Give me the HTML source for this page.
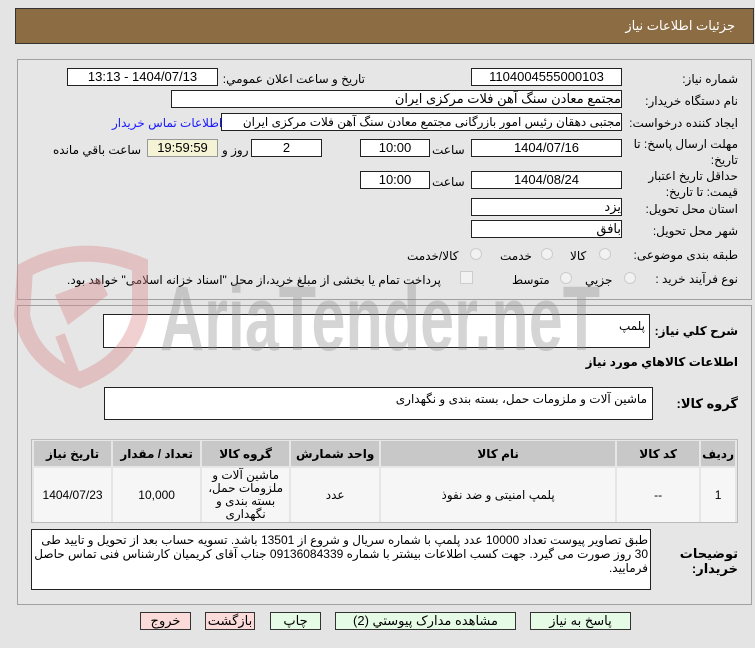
<!DOCTYPE html>
<html><head><meta charset="utf-8"><style>
body{margin:0;width:755px;height:648px;background:#e4e4e4;font-family:Tahoma,"Liberation Sans","DejaVu Sans",sans-serif;font-size:12px;color:#000;position:relative;overflow:hidden}
.a{position:absolute}
.hdr{left:15px;top:8px;width:737px;height:34px;background:#8c6c43;border:1px solid #333;}
.hdr span{position:absolute;right:18px;top:9px;color:#fff;font-size:13px}
.panel{border:1px solid #a0a0a0;background:#e6e6e6}
.box{position:absolute;background:#fff;border:1px solid #222;height:16px;line-height:16px;text-align:center;font-size:13px;direction:rtl;white-space:nowrap;overflow:hidden}
.lbl{position:absolute;direction:rtl;white-space:nowrap;font-size:12px}
.rad{position:absolute;width:10px;height:10px;border:1px solid #ccc;border-radius:50%;background:#f2f2f2}
table{border-collapse:separate;border-spacing:2px;direction:rtl}
td,th{text-align:center;font-size:12px}
th{background:#c8c8c8;height:23px;font-weight:bold}
td{background:#f6f6f6}
.btn{position:absolute;top:612px;height:16px;border:1px solid #333;background:#e6fbe6;text-align:center;line-height:16px;font-size:13px}
.red{background:#fbdada}
</style></head><body>
<div class="a hdr"><span>جزئيات اطلاعات نياز</span></div>
<div class="a panel" style="left:17px;top:59px;width:733px;height:239px"></div>
<div class="a panel" style="left:17px;top:305px;width:733px;height:298px"></div>

<div class="lbl" style="right:17px;top:72px">شماره نياز:</div>
<div class="box" style="left:471px;top:68px;width:149px">1104004555000103</div>
<div class="lbl" style="right:390px;top:72px">تاريخ و ساعت اعلان عمومي:</div>
<div class="box" style="left:67px;top:68px;width:149px">1404/07/13 - 13:13</div>

<div class="lbl" style="right:17px;top:94px">نام دستگاه خريدار:</div>
<div class="box" style="left:171px;top:90px;width:449px;text-align:right">مجتمع معادن سنگ آهن فلات مرکزی ایران&nbsp;</div>

<div class="lbl" style="right:17px;top:116px">ايجاد کننده درخواست:</div>
<div class="box" style="left:221px;top:113px;width:399px;text-align:right;font-size:12px">مجتبی  دهقان رئیس امور بازرگانی مجتمع معادن سنگ آهن فلات مرکزی ایران&nbsp;</div>
<div class="lbl" style="left:112px;top:116px;color:#1a1aff">اطلاعات تماس خريدار</div>

<div class="lbl" style="right:17px;top:136px;text-align:right;line-height:16px">مهلت ارسال پاسخ: تا<br>تاريخ:</div>
<div class="box" style="left:471px;top:139px;width:149px">1404/07/16</div>
<div class="lbl" style="left:432px;top:143px">ساعت</div>
<div class="box" style="left:360px;top:139px;width:68px">10:00</div>
<div class="box" style="left:251px;top:139px;width:69px">2</div>
<div class="lbl" style="left:222px;top:143px">روز و</div>
<div class="box" style="left:147px;top:139px;width:69px;background:#f5f3d5;border-color:#999">19:59:59</div>
<div class="lbl" style="left:53px;top:143px">ساعت باقي مانده</div>

<div class="lbl" style="right:17px;top:168px;text-align:right;line-height:16px">حداقل تاريخ اعتبار<br>قيمت: تا تاريخ:</div>
<div class="box" style="left:471px;top:171px;width:149px">1404/08/24</div>
<div class="lbl" style="left:432px;top:175px">ساعت</div>
<div class="box" style="left:360px;top:171px;width:68px">10:00</div>

<div class="lbl" style="right:17px;top:202px">استان محل تحويل:</div>
<div class="box" style="left:471px;top:198px;width:149px;text-align:right">يزد&nbsp;</div>
<div class="lbl" style="right:17px;top:224px">شهر محل تحويل:</div>
<div class="box" style="left:471px;top:220px;width:149px;text-align:right">بافق&nbsp;</div>

<div class="lbl" style="right:17px;top:248px">طبقه بندی موضوعی:</div>
<div class="rad" style="left:599px;top:248px"></div><div class="lbl" style="left:570px;top:249px">کالا</div>
<div class="rad" style="left:541px;top:248px"></div><div class="lbl" style="left:500px;top:249px">خدمت</div>
<div class="rad" style="left:470px;top:248px"></div><div class="lbl" style="left:407px;top:249px">کالا/خدمت</div>

<div class="lbl" style="right:17px;top:272px">نوع فرآيند خريد :</div>
<div class="rad" style="left:624px;top:272px"></div><div class="lbl" style="left:585px;top:273px">جزيي</div>
<div class="rad" style="left:560px;top:272px"></div><div class="lbl" style="left:512px;top:273px">متوسط</div>
<div class="a" style="left:460px;top:271px;width:11px;height:11px;border:1px solid #ccc;background:#f2f2f2"></div>
<div class="lbl" style="left:67px;top:273px">پرداخت تمام يا بخشی از مبلغ خريد،از محل "اسناد خزانه اسلامی" خواهد بود.</div>

<div class="lbl" style="right:17px;top:324px;font-weight:bold">شرح کلي نياز:</div>
<div class="a" style="left:103px;top:314px;width:547px;height:34px;background:#fff;border:1px solid #222;direction:rtl;padding:0 4px;box-sizing:border-box;padding-top:4px">پلمپ</div>
<div class="lbl" style="right:17px;top:355px;font-weight:bold">اطلاعات کالاهاي مورد نياز</div>
<div class="lbl" style="right:17px;top:396px;font-weight:bold;font-size:13px">گروه کالا:</div>
<div class="a" style="left:104px;top:387px;width:549px;height:33px;background:#fff;border:1px solid #222;direction:rtl;padding:4px 5px 0;box-sizing:border-box">ماشین آلات و ملزومات حمل، بسته بندی و نگهداری</div>

<div class="a" style="left:31px;top:439px;width:705px;height:82px;border:1px solid #bbb;background:#e6e6e6">
<table style="width:705px;margin:-1px 0 0 0">
<tr><th style="width:28px">رديف</th><th style="width:80px">کد کالا</th><th style="width:232px">نام کالا</th><th style="width:86px">واحد شمارش</th><th style="width:85px">گروه کالا</th><th style="width:85px">تعداد / مقدار</th><th>تاريخ نياز</th></tr>
<tr style="height:54px"><td>1</td><td>--</td><td>پلمپ امنیتی و ضد نفوذ</td><td>عدد</td><td style="line-height:13px">ماشين آلات و ملزومات حمل، بسته بندی و نگهداری</td><td>10,000</td><td>1404/07/23</td></tr>
</table></div>

<div class="lbl" style="right:17px;top:546px;font-weight:bold;font-size:13px;text-align:right;line-height:15px">توضيحات<br>خريدار:</div>
<div class="a" style="left:31px;top:529px;width:620px;height:61px;background:#fff;border:1px solid #222;direction:rtl;padding:3px 2px;box-sizing:border-box;line-height:14px;font-size:12px">طبق تصاویر پیوست تعداد 10000 عدد پلمپ با شماره سریال و شروع از 13501 باشد. تسویه حساب بعد از تحویل و تایید طی 30 روز صورت می گیرد. جهت کسب اطلاعات بیشتر با شماره 09136084339 جناب آقای کریمیان کارشناس فنی تماس حاصل فرمایید.</div>

<div class="btn" style="left:530px;width:99px">پاسخ به نياز</div>
<div class="btn" style="left:335px;width:179px">مشاهده مدارک پيوستي (2)</div>
<div class="btn" style="left:270px;width:49px">چاپ</div>
<div class="btn red" style="left:205px;width:48px">بازگشت</div>
<div class="btn red" style="left:140px;width:49px">خروج</div>

<svg class="a" style="left:0;top:240px;pointer-events:none" width="620" height="150">
<g opacity="0.4">
<path d="M25 30 Q80 0 140 25 L140 75 Q130 120 80 140 Q30 120 22 75 Z" fill="none" stroke="#d98a8a" stroke-width="16"/>
<path d="M55 55 L100 38 L108 55 L68 85 Z" fill="#d98a8a"/>
<path d="M60 95 L75 135" stroke="#d98a8a" stroke-width="10"/>
</g>
<text x="160" y="110" font-family="Liberation Sans Narrow,Liberation Sans,sans-serif" font-weight="bold" font-size="92" fill="#8a8a8a" opacity="0.35" textLength="440" lengthAdjust="spacingAndGlyphs">AriaTender.neT</text>
</svg>
</body></html>
